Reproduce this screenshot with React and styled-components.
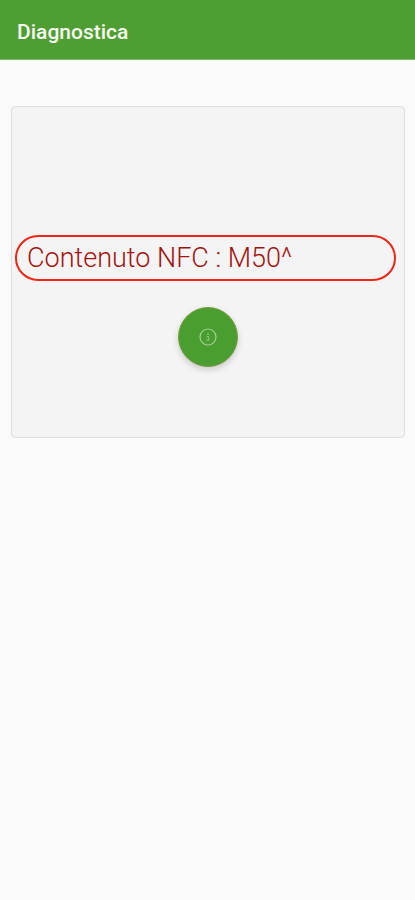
import React from "react";
import styled, { createGlobalStyle } from "styled-components";

const GlobalStyle = createGlobalStyle`
  * {
    box-sizing: border-box;
  }
  body {
    margin: 0;
    background-color: #fafafa;
    font-family: Roboto, "Liberation Sans", sans-serif;
  }
`;

// Styled components

const Page = styled.div`
  min-height: 100vh;
  display: flex;
  flex-direction: column;
`;

const AppBar = styled.header`
  display: flex;
  align-items: center;
  padding: 19px 17px 14px;
  background-color: #4f9e33;
  border-bottom: 1px solid #7fb96c;
`;

const Title = styled.h1`
  margin: 0;
  color: #f7fbf2;
  font-size: 21px;
  line-height: 26px;
  font-weight: 500;
`;

const Content = styled.main`
  padding: 46px 10px 46px 11px;
`;

const Card = styled.section`
  display: flex;
  flex-direction: column;
  align-items: center;
  gap: 26px;
  padding: 128px 8px 70px 3px;
  background-color: #f4f4f4;
  border: 1px solid #dedede;
  border-radius: 4px;
`;

const NfcContent = styled.p`
  align-self: stretch;
  margin: 0;
  padding: 7px 10px;
  color: #a31410;
  border: 2px solid #ee2618;
  border-radius: 23px;
  font-size: 27px;
  line-height: 28px;
  font-weight: 350;
`;

const ScanButton = styled.button`
  display: flex;
  align-items: center;
  justify-content: center;
  width: 60px;
  height: 60px;
  margin-left: 4px;
  padding: 0;
  border: 1px solid #7d9a45;
  border-radius: 50%;
  background-color: #4a9e30;
  box-shadow: 0 3px 6px rgba(0, 0, 0, 0.16);
  cursor: pointer;
`;

const InfoIcon = () => (
  <svg width="20" height="20" viewBox="0 0 20 20" fill="none" aria-hidden="true">
    <circle cx="10" cy="10" r="8" stroke="#a5cf95" strokeWidth="1.2" />
    <circle cx="10" cy="7" r="1" fill="#8cc078" />
    <path d="M8.5 9.5H10.5V13M8 13H12" stroke="#8cc078" strokeWidth="1.2" />
  </svg>
);

const App = () => {
  return (
    <>
      <GlobalStyle />
      <Page>
        <AppBar>
          <Title>Diagnostica</Title>
        </AppBar>
        <Content>
          <Card>
            <NfcContent>Contenuto NFC : M50^</NfcContent>
            <ScanButton type="button" aria-label="Info">
              <InfoIcon />
            </ScanButton>
          </Card>
        </Content>
      </Page>
    </>
  );
};

export default App;
